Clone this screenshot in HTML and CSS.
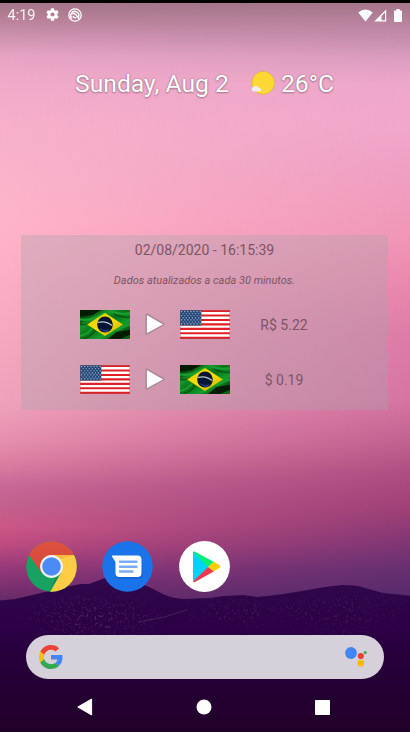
FILE: index.html
```html
<!DOCTYPE html>
<html lang="en">
<head>
<meta charset="utf-8">
<title>Home screen</title>
<link rel="stylesheet" href="styles.css">
</head>
<body>
<svg width="0" height="0" class="defs" aria-hidden="true">
  <defs>
    <linearGradient id="bgreen" x1="0" y1="0" x2="1" y2="1">
      <stop offset="0" stop-color="#032806"/><stop offset=".18" stop-color="#064d0a"/><stop offset=".3" stop-color="#15992b"/><stop offset=".48" stop-color="#087018"/><stop offset=".68" stop-color="#12a02a"/><stop offset=".85" stop-color="#064a0d"/><stop offset="1" stop-color="#087018"/>
    </linearGradient>
    <linearGradient id="byellow" x1="0" y1="0" x2="1" y2="1">
      <stop offset="0" stop-color="#d5c900"/><stop offset=".5" stop-color="#ffe000"/><stop offset="1" stop-color="#bba800"/>
    </linearGradient>
    <symbol id="brazil" viewBox="0 0 50 28" preserveAspectRatio="none">
      <path fill="url(#bgreen)" d="M0 0h50v28H0z"/>
      <path fill="#021c04" d="M0 0h21L12 5 0 6zM28 28l9-7 13-2v5l-10 4z"/>
      <path fill="none" stroke="#17a02f" stroke-width="2.2" d="M0 9q12 2 24-6M0 25q7-1 12-7M30 1q9 4 20 2M36 20q8-5 14-6"/>
      <path fill="none" stroke="#043b08" stroke-width="1.3" opacity=".6" d="M0 14q7 1 10-2M34 4q8 4 16 3M3 28q8-2 12-8"/>
      <path fill="url(#byellow)" d="M7 14 25 3l18 11-18 11z"/>
      <circle cx="25" cy="14" r="7.8" fill="#061536"/>
      <path fill="#24417d" d="M19 17q5 4 11 1l-2 3q-5 1-9-4z"/>
      <path fill="none" stroke="#b9cbd0" stroke-width="1.3" d="M18 12q8-2 14 3"/>
    </symbol>
    <symbol id="usa" viewBox="0 0 50 28" preserveAspectRatio="none">
      <path fill="#fff" d="M0 0h50v28H0z"/>
      <path stroke="#df2027" stroke-width="2.05" d="M0 1h50M0 5.3h50M0 9.600h50M0 13.900h50M0 18.200h50M0 22.500h50M0 26.900h50"/>
      <path fill="#204577" d="M0 0h21.300v15H0z"/>
      <path fill="none" stroke="#a9b9cf" stroke-width="1.100" stroke-dasharray="1.200 1.900" d="M1 1.600h20M2.500 3.600h18M1 5.600h20M2.500 7.600h18M1 9.600h20M2.500 11.600h18M1 13.400h20"/>
      <path fill="none" stroke="#a0676a" stroke-width=".5" d="M.2.2h49.600v27.600H.2z"/>
    </symbol>
    <symbol id="play" viewBox="0 0 20 23">
      <path fill="#fff" stroke="#a98497" stroke-width="1.400" stroke-linejoin="round" d="M1.200 1.800v18.600q0 1 1 .5L18.200 12q1-.7 0-1.300L2.200 1.300q-1-.5-1 .5z"/>
    </symbol>
  </defs>
</svg>
<main class="phone">
  <div class="wallpaper" aria-hidden="true">
    <div class="sky sky-left"></div>
    <div class="sky sky-right"></div>
    <svg class="hills" viewBox="0 0 410 152" width="410" height="152">
      <defs>
        <linearGradient id="hill" x1="0" y1="0" x2="0" y2="1"><stop offset="0" stop-color="#30084b"/><stop offset=".35" stop-color="#2b0044"/><stop offset=".55" stop-color="#26003a"/><stop offset="1" stop-color="#210028"/></linearGradient>
        <filter id="grain" x="0" y="0" width="100%" height="100%" color-interpolation-filters="sRGB"><feTurbulence type="fractalNoise" baseFrequency=".37" numOctaves="3" seed="8"/><feColorMatrix values="0 0 0 0 .3  0 0 0 0 .17  0 0 0 0 .36  6 0 0 0 -3.4"/></filter>
        <radialGradient id="patch"><stop offset="0" stop-color="#fff"/><stop offset="1" stop-color="#000"/></radialGradient>
        <mask id="grains"><ellipse cx="95" cy="38" rx="85" ry="30" fill="url(#patch)"/><ellipse cx="250" cy="32" rx="85" ry="22" fill="url(#patch)" opacity=".6"/><ellipse cx="340" cy="32" rx="80" ry="38" fill="url(#patch)" opacity=".55"/></mask>
      </defs>
      <path fill="url(#hill)" d="M0 20.500 15 19l26-6q20-6 40-9h8l16-6 6-1q20 3 36 9l18 9q10 4 20 4l25-1 14-2 19-1 14 2 20-2 25-4 23-4 17-2q17 0 23 3l18 5 30 3 17 3v133H0z"/>
      <path class="grain" filter="url(#grain)" mask="url(#grains)" d="M0 15h410v70H0z"/>
      <path fill="none" stroke="#51345c" stroke-width="1" opacity=".65" d="M139 42q26-4 48-12"/>
    </svg>
  </div>

  <header class="status">
    <span class="clock">4:19</span>
    <svg class="gear" viewBox="2 2 20 20" width="13" height="13"><path fill="#fff" d="M19.14 12.94a7.5 7.5 0 0 0 .06-.94 7 7 0 0 0-.07-.94l2.03-1.58a.5.5 0 0 0 .12-.61l-1.92-3.32a.5.5 0 0 0-.59-.22l-2.39.96a7 7 0 0 0-1.62-.94l-.36-2.54a.5.5 0 0 0-.48-.41h-3.84a.5.5 0 0 0-.47.41l-.36 2.54a7.4 7.4 0 0 0-1.62.94l-2.39-.96a.5.5 0 0 0-.59.22L2.74 8.87a.5.5 0 0 0 .12.61l2.03 1.58a7 7 0 0 0 0 1.88l-2.03 1.58a.5.5 0 0 0-.12.61l1.92 3.32c.12.22.37.29.59.22l2.39-.96c.5.38 1.03.7 1.62.94l.36 2.54c.05.24.24.41.48.41h3.84c.24 0 .44-.17.47-.41l.36-2.54a7 7 0 0 0 1.62-.94l2.39.96c.22.08.47 0 .59-.22l1.92-3.32a.5.5 0 0 0-.12-.61zM12 15.2A3.2 3.2 0 1 1 12 8.800a3.200 3.200 0 0 1 0 6.400z"/></svg>
    <svg class="sync" viewBox="0 0 14 14" width="14" height="14" fill="none" stroke="#fff"><circle cx="7" cy="7" r="6.200" stroke-width="1.300"/><path stroke-width="1.400" d="M4.200 10.400A4 4 0 1 1 10.600 8.700M4.500 6.200q1.500-1.500 3 0l3.600 4.600M5 8.200q1 1.900 3.200 1.600"/></svg>
    <span class="spacer"></span>
    <svg class="wifi" viewBox="0 0 15 13" width="15" height="13"><path fill="#fff" d="M7.500 12.500.2 3.600q7.300-6.200 14.600 0z"/></svg>
    <svg class="signal" viewBox="0 0 13 13" width="13" height="13"><path fill="#fff" fill-rule="evenodd" d="M12.200.5v12H.2zM11 3.400 7.500 6.900v4.400H11z"/></svg>
    <svg class="battery" viewBox="0 0 8 13" width="8" height="13"><path fill="#fff" d="M2.300 0h3.400v1.500H7q1 0 1 1V12q0 1-1 1H1q-1 0-1-1V2.500q0-1 1-1h1.300z"/></svg>
  </header>

  <section class="glance">
    <span class="date">Sunday, Aug 2</span>
    <svg class="weather" viewBox="0 0 24 24" width="24" height="24"><circle cx="12.200" cy="11.800" r="11.500" fill="#fdd835" stroke="#c29a62" stroke-width=".5"/><path fill="#eee" d="M2.500 20.500a2.400 2.400 0 0 1 .2-4.700 3.200 3.200 0 0 1 5.300 1.100 1.900 1.900 0 0 1 1 3.600z"/></svg>
    <span class="temp">26°C</span>
  </section>

  <section class="widget">
    <div class="stamp">02/08/2020 - 16:15:39</div>
    <div class="note">Dados atualizados a cada 30 minutos.</div>
    <div class="rate">
      <svg class="flag"><use href="#brazil"/></svg>
      <svg class="arrow"><use href="#play"/></svg>
      <svg class="flag"><use href="#usa"/></svg>
      <span class="value">R$ 5.22</span>
    </div>
    <div class="rate">
      <svg class="flag"><use href="#usa"/></svg>
      <svg class="arrow"><use href="#play"/></svg>
      <svg class="flag"><use href="#brazil"/></svg>
      <span class="value">$ 0.19</span>
    </div>
  </section>

  <nav class="dock">
    <svg viewBox="0 0 51 51" width="51" height="51">
      <defs><clipPath id="disc"><circle cx="25.500" cy="25.500" r="25.300"/></clipPath><linearGradient id="redshade" x1="0" y1="0" x2="0" y2="1"><stop offset="0" stop-color="#df5040"/><stop offset="1" stop-color="#d34939"/></linearGradient></defs>
      <g clip-path="url(#disc)"><path fill="#17a261" d="M0 0h51v51H0z"/><path fill="#ffcd45" d="M25.500 14H51v37H24l11.500-20z"/><path fill="url(#redshade)" d="M3 14V0h48v14H25.500L15 31.300z"/><path fill="#e5a936" opacity=".5" d="M25.500 14H48l-14 4z"/><path fill="#108653" opacity=".6" d="m35 31-11 20 6-17z"/></g>
      <circle cx="25.500" cy="25.500" r="11.400" fill="#f1f1f1"/><circle cx="25.500" cy="25.500" r="9.300" fill="#4c8bf5"/>
    </svg>
    <svg viewBox="0 0 51 51" width="51" height="51">
      <circle cx="25.500" cy="25.500" r="25.300" fill="#1a73e8"/>
      <path fill="#0d55b5" opacity=".45" d="M14 35q1 3 5 3h17q5 0 5-5l-1-17z"/>
      <path fill="#fff" d="M10 15.500q-.5-.9.500-.900H35.500q4 0 4 4V32q0 4-4 4H17.500q-4 0-4-4V21z"/>
      <path stroke="#7baaf7" stroke-width="2.500" stroke-linecap="round" d="M18 20.800h16.500M18 25.700h16.500M18 30.500h12.500"/>
    </svg>
    <svg viewBox="0 0 51 51" width="51" height="51">
      <circle cx="25.500" cy="25.500" r="25.400" fill="#fff"/>
      <path fill="#00d2ff" d="M14 12v28q0 1 1 .5L29.500 26 15 10.500q-1 0-1 1.500z"/><path fill="#00ef76" d="M14.200 10.800q.7-.7 1.800 0l18.700 10-5.700 5.400z"/><path fill="#ffce00" d="m34.700 20.800 5.500 3.200q2 1.500 0 3l-5.500 3.400-5.700-4.500z"/><path fill="#f3364c" d="m29 26 5.700 4.400L16 41q-1.200.6-1.800-.5z"/>
    </svg>
  </nav>

  <div class="search">
    <svg viewBox="0 0 48 48" width="24" height="24"><path fill="#ea4335" d="M24 9.500c3.540 0 6.710 1.220 9.210 3.600l6.850-6.850C35.900 2.380 30.470 0 24 0 14.620 0 6.510 5.380 2.560 13.220l7.980 6.190C12.430 13.720 17.740 9.500 24 9.500z"/><path fill="#4285f4" d="M46.980 24.550c0-1.570-.15-3.090-.38-4.550H24v9.020h12.940c-.58 2.960-2.260 5.480-4.780 7.180l7.730 6c4.510-4.180 7.090-10.360 7.090-17.650z"/><path fill="#fbbc05" d="M10.530 28.590A14.500 14.500 0 0 1 9.770 24c0-1.600.27-3.140.76-4.590l-7.980-6.190A23.900 23.900 0 0 0 0 24c0 3.880.92 7.540 2.560 10.780z"/><path fill="#34a853" d="M24 48c6.480 0 11.930-2.130 15.890-5.810l-7.730-6c-2.150 1.450-4.920 2.300-8.160 2.300-6.260 0-11.570-4.220-13.470-9.910l-7.980 6.190C6.510 42.620 14.620 48 24 48z"/></svg>
    <svg viewBox="0 0 22 20" width="22" height="20"><circle cx="6" cy="6" r="5.900" fill="#4285f4"/><circle cx="15.800" cy="9" r="3.100" fill="#ea4335"/><circle cx="20.200" cy="5.500" r="1.500" fill="#34a853"/><circle cx="15.800" cy="16.200" r="3.400" fill="#fbbc05"/></svg>
  </div>

  <nav class="keys">
    <svg viewBox="0 0 16 18" width="16" height="18"><path fill="#fff" d="M14.600 1v16L.8 9z" stroke="#fff" stroke-linejoin="round"/></svg>
    <svg viewBox="0 0 16 16" width="16" height="16"><circle cx="8" cy="8" r="7.500" fill="#fff"/></svg>
    <svg viewBox="0 0 15 15" width="15" height="15"><rect width="15" height="15" rx=".8" fill="#fff"/></svg>
  </nav>
</main>
</body>
</html>
```
FILE: styles.css
```css
* { box-sizing: border-box; }
body { margin: 0; font-family: Roboto, "Liberation Sans", sans-serif; }
svg { display: block; flex: none; }
.defs { position: absolute; }
.phone {
  position: relative;
  width: 410px;
  height: 732px;
  overflow: hidden;
  display: flex;
  flex-direction: column;
  border-top: 3px solid #000;
}
.wallpaper { position: absolute; inset: -3px 0 0; z-index: -1; }
.sky { position: absolute; inset: 0; }
.sky-left {
  background: linear-gradient(180deg, #a47589 3px, #b98299 20px, #ca8fab 33px, #e6a3c2 55px, #f1aac9 80px, #f7b0cb 125px, #fab3cb 165px, #ffb5c9 220px, #fdb0c6 270px, #f7abc1 330px, #f0a3bc 405px, #e992b0 440px, #dd80a3 463px, #cb6b98 485px, #c5638f 503px, #cf5987 527px, #c14d81 545px, #943678 572px, #692b69 600px);
}
.sky-right {
  background: linear-gradient(180deg, #a47589 3px, #b5809b 20px, #c28ba9 35px, #dc9dc0 60px, #eda7ca 85px, #f1a6ca 125px, #ee9fc2 170px, #f095b7 235px, #ea87ad 280px, #dd7ba6 330px, #d5739f 400px, #c16190 440px, #ac4c80 475px, #9d3f77 510px, #7d3573 545px, #642f71 570px, #542a6b 600px);
  mask-image: linear-gradient(92deg, transparent 0, #0008 50%, #000 100%);
}
.hills { position: absolute; left: 0; top: 580px; overflow: visible; }
.status { height: 24px; display: flex; align-items: center; padding: 0 8px 0 7.500px; color: #fff; }
.clock { font-size: 14.500px; line-height: 24px; width: 38.500px; padding-top: 2px; opacity: .9; }
.gear, .sync { margin-top: -1px; }
.sync { margin-left: 8.500px; }
.spacer { flex: 1; }
.signal { margin: 0 7px 0 1px; }
.glance { height: 50px; margin: 32px 0 0 75px; display: flex; align-items: center; color: #fff; font-size: 24.700px; line-height: 50px; text-shadow: 0 0 1.500px #594052b0, 0 1px 2px #59405270; white-space: nowrap; }
.date { width: 175.500px; }
.weather { margin-top: -2px; }
.temp { margin-left: 6.500px; }
.widget { width: 367px; height: 175px; margin: 126px 0 0 21px; color: #7b5565; background: rgba(166, 164, 174, .34); }
.stamp { height: 30px; line-height: 31px; text-align: center; font-size: 14px; }
.note { height: 31px; line-height: 31px; text-align: center; font-size: 11px; font-style: italic; }
.rate { display: flex; align-items: center; height: 29px; margin: 14px 0 26px 59px; }
.flag { width: 50px; height: 29px; }
.arrow { width: 20px; height: 23px; margin: 0 15px 0 14.500px; }
.value { width: 109px; text-align: center; font-size: 14px; padding-top: 1px; }
.dock { display: flex; gap: 25.700px; margin: 131px 0 0 25.500px; }
.search { height: 44px; width: 358px; margin: 43px 0 0 25.500px; border-radius: 23px; background: #d6d0da; display: flex; align-items: center; justify-content: space-between; padding: 0 17px 0 13.500px; }
.keys { height: 50px; margin-top: 4px; padding: 0 80px 0 77px; display: flex; align-items: center; justify-content: space-between; }
```
